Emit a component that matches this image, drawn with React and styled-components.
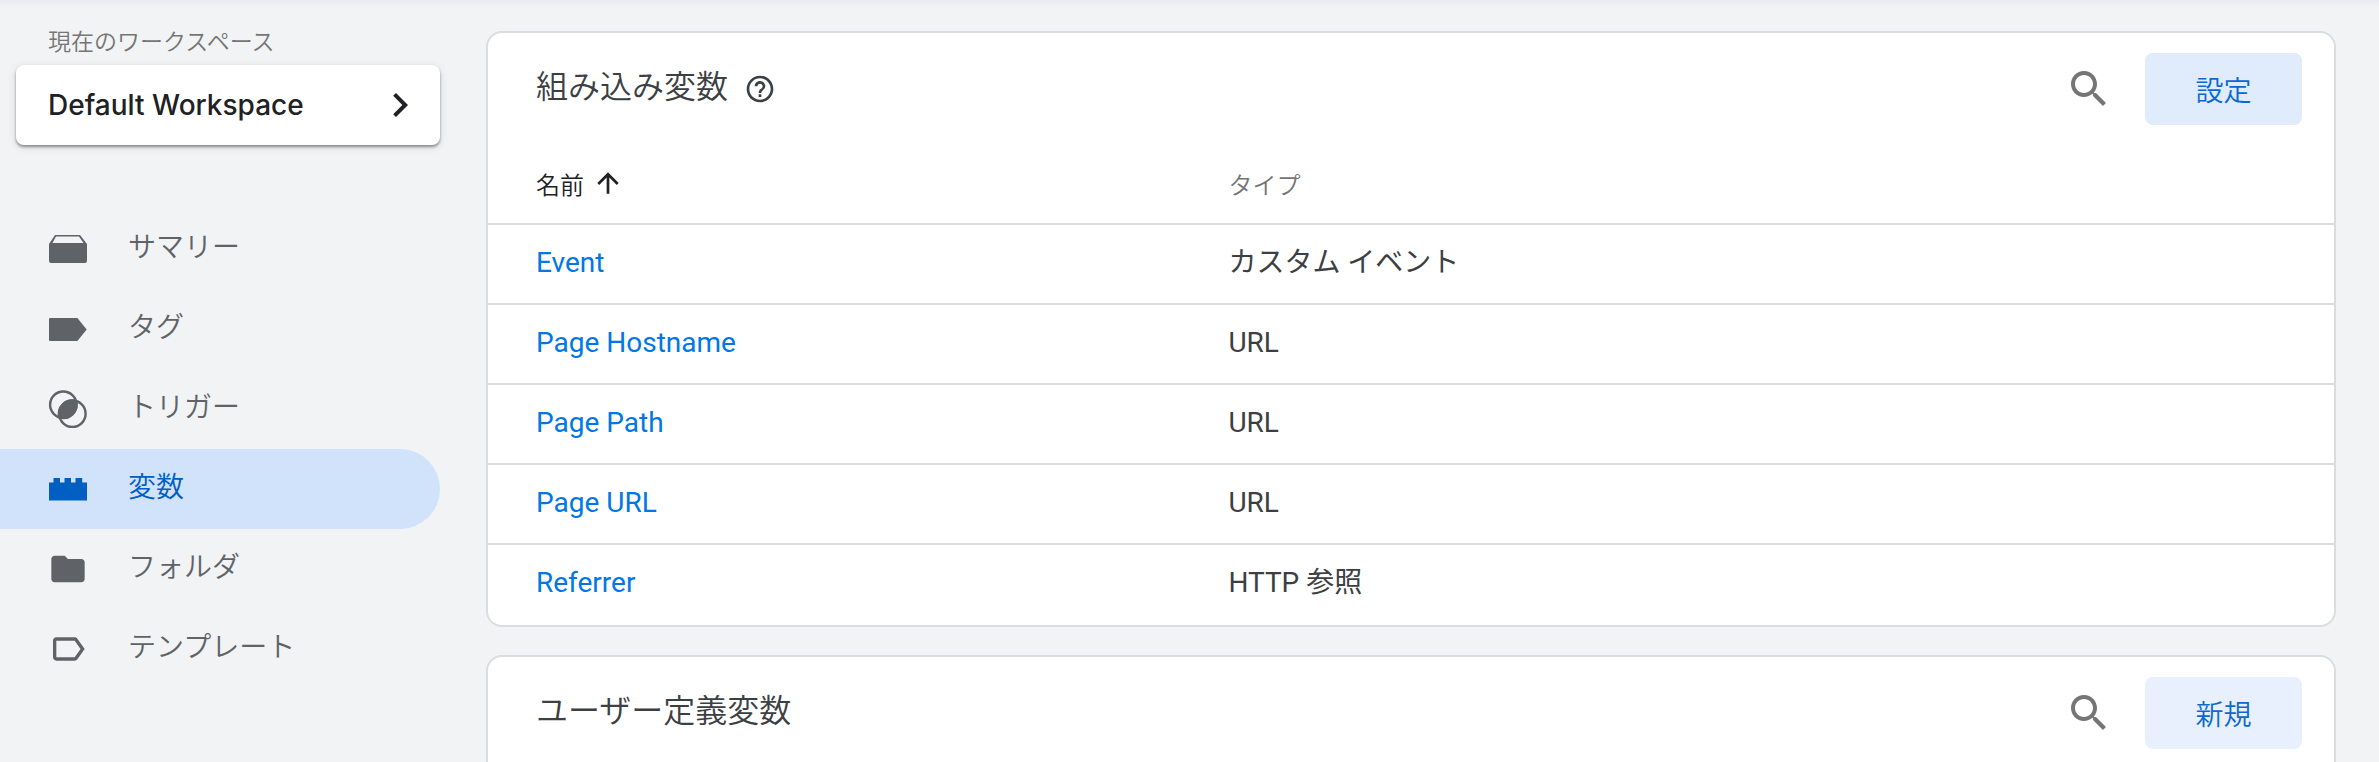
import styled, { createGlobalStyle } from 'styled-components';

const GlobalStyle = createGlobalStyle`
    * {
        box-sizing: border-box;
    }
    body {
        margin: 0;
        background-color: #f1f3f4;
        color: #3c4043;
        font-family: Roboto, "Noto Sans CJK JP", sans-serif;
        font-size: 28px;
        font-weight: 350;
    }
    button {
        font-family: inherit;
        border: none;
        cursor: pointer;
    }
    svg {
        display: block;
        flex: none;
        fill: currentColor;
    }
`;

const Page = styled.div`
    display: flex;
    gap: 46px;
    height: 100vh;
    overflow: hidden;
    background-image: linear-gradient(#e8ecee, #f1f3f4 8px);
`;

const Sidebar = styled.aside`
    flex: none;
    width: 440px;
    padding-top: 26px;
`;

const WorkspaceLabel = styled.div`
    padding-left: 48px;
    font-size: 23px;
    line-height: 34px;
    color: #757575;
`;

const WorkspaceButton = styled.button`
    display: flex;
    align-items: center;
    justify-content: space-between;
    width: 424px;
    height: 80px;
    margin: 5px 0 64px 16px;
    padding: 0 16px 0 32px;
    border-radius: 8px;
    background-color: white;
    box-shadow: 0 2px 3px rgba(0, 0, 0, 0.4), 0 2px 10px rgba(60, 64, 67, 0.12);
    color: #202124;
    font-family: Inter, sans-serif;
    font-size: 28px;
    font-weight: 500;
`;

const NavItem = styled.a`
    display: flex;
    align-items: center;
    gap: 40px;
    height: 80px;
    padding-left: 48px;
    border-radius: 0 40px 40px 0;
    background-color: ${props => props.$active ? '#d1e2fb' : 'transparent'};
    color: ${props => props.$active ? '#005fc1' : '#5f6368'};
    text-decoration: none;
`;

const NavText = styled.span`
    padding-bottom: 2px;
    line-height: 40px;
`;

const Main = styled.main`
    flex: 1;
    padding: 31px 43px 0 0;
`;

const Card = styled.section`
    min-height: 240px;
    margin-bottom: 28px;
    border: 2px solid #dadce0;
    border-radius: 16px;
    background-color: white;
`;

const CardHeader = styled.header`
    display: flex;
    align-items: center;
    height: 112px;
    padding: 0 32px 0 48px;
`;

const Title = styled.h2`
    margin: 0;
    padding-bottom: 4px;
    font-size: 32px;
    font-weight: inherit;
    line-height: 48px;
`;

const IconButton = styled.button`
    padding: 0;
    background: none;
    color: ${props => props.$color};
    margin-left: ${props => props.$end ? 'auto' : '16px'};
`;

const ActionButton = styled.button`
    width: 157px;
    height: 72px;
    margin-left: 32px;
    border-radius: 8px;
    background-color: ${props => props.$hover ? '#e0ebfc' : '#e8f0fd'};
    color: #0b69d0;
    font-size: 28px;
    font-weight: inherit;
`;

const Table = styled.table`
    width: 100%;
    border-collapse: separate;
    border-spacing: 0;
    table-layout: fixed;
`;

const Th = styled.th`
    width: ${props => props.$first ? '40%' : 'auto'};
    height: 80px;
    padding: 0 0 2px ${props => props.$first ? '48px' : '2px'};
    border-bottom: 2px solid #dadce0;
    color: ${props => props.$first ? '#202124' : '#757575'};
    font-size: 24px;
    font-weight: inherit;
    text-align: left;
`;

const SortLabel = styled.span`
    display: flex;
    align-items: center;
    gap: 8px;
`;

const Td = styled.td`
    height: 80px;
    padding: 0 0 2px 2px;
    border-bottom: 2px solid #dadce0;
    font-size: 28px;
    font-weight: 400;
    line-height: 40px;
    &:first-child {
        padding-left: 48px;
    }
    tr:last-child > & {
        border-bottom-color: transparent;
    }
`;

const VariableLink = styled.a`
    color: #0077e6;
    text-decoration: none;
`;

const ICONS = {
    help: 'M11 18h2v-2h-2v2zm1-16C6.48 2 2 6.48 2 12s4.48 10 10 10 10-4.48 10-10S17.52 2 12 2zm0 18c-4.41 0-8-3.59-8-8s3.59-8 8-8 8 3.59 8 8-3.59 8-8 8zm0-14c-2.21 0-4 1.79-4 4h2c0-1.1.9-2 2-2s2 .9 2 2c0 2-3 1.75-3 5h2c0-2.25 3-2.5 3-5 0-2.21-1.79-4-4-4z',
    search: 'M15.5 14h-.79l-.28-.27C15.41 12.59 16 11.11 16 9.5 16 5.91 13.09 3 9.5 3S3 5.91 3 9.5 5.91 16 9.5 16c1.61 0 3.09-.59 4.23-1.57l.27.28v.79l5 4.99L20.49 19l-4.99-5zm-6 0C7.01 14 5 11.99 5 9.5S7.01 5 9.5 5 14 7.01 14 9.5 11.99 14 9.5 14z',
    arrowUp: 'M4 12l1.41 1.41L11 7.83V20h2V7.83l5.58 5.59L20 12l-8-8-8 8z',
    chevron: 'M8.59 16.59L13.17 12 8.59 7.41 10 6l6 6-6 6z',
    folder: 'M10 4H4c-1.1 0-1.99.9-1.99 2L2 18c0 1.1.9 2 2 2h16c1.1 0 2-.9 2-2V8c0-1.1-.9-2-2-2h-8l-2-2z',
    template: 'M17.63 5.84C17.27 5.33 16.67 5 16 5L5 5.01C3.9 5.01 3 5.9 3 7v10c0 1.1.9 1.99 2 1.99L16 19c.67 0 1.27-.33 1.63-.84L22 12l-4.37-6.16zM16 17H5V7h11l3.55 5L16 17z',
};

const Icon = ({ name, size }) => (
    <svg width={size} height={size} viewBox="0 0 24 24" aria-hidden="true">
        <path d={ICONS[name]} />
    </svg>
);

const SummaryIcon = () => (
    <svg width="40" height="40" viewBox="0 0 40 40" aria-hidden="true">
        <path fillRule="evenodd" d="M7 6h25l7 9v17a2 2 0 0 1-2 2H3a2 2 0 0 1-2-2V15zM8 7.5L4.5 14h31L31 7.5z" />
    </svg>
);

const TagIcon = () => (
    <svg width="40" height="40" viewBox="0 0 40 40" aria-hidden="true">
        <path d="M2 9h27.4l9.3 11.5L29.4 32H2a1 1 0 0 1-1-1V10a1 1 0 0 1 1-1z" />
    </svg>
);

const TriggerIcon = () => (
    <svg width="40" height="40" viewBox="0 0 40 40" aria-hidden="true">
        <g fill="none" stroke="currentColor" strokeWidth="2.4">
            <circle cx="15.3" cy="15.7" r="13.2" />
            <circle cx="24.4" cy="24.7" r="13.2" />
        </g>
        <path d="M29 11.3A14.4 14.4 0 0 1 10.4 29.3A14.4 14.4 0 0 1 29 11.3z" />
    </svg>
);

const VariableIcon = () => (
    <svg width="40" height="40" viewBox="0 0 40 40" aria-hidden="true">
        <path d="M1 13.5h4.5V9H12v4.5h4.5V9H23v4.5h4.5V9h6.7v4.5H39v18H1z" />
    </svg>
);

const navItems = [
    { label: 'サマリー', icon: <SummaryIcon /> },
    { label: 'タグ', icon: <TagIcon /> },
    { label: 'トリガー', icon: <TriggerIcon /> },
    { label: '変数', icon: <VariableIcon />, active: true },
    { label: 'フォルダ', icon: <Icon name="folder" size={40} /> },
    { label: 'テンプレート', icon: <Icon name="template" size={40} /> },
];

const builtInVariables = [
    { name: 'Event', type: 'カスタム イベント' },
    { name: 'Page Hostname', type: 'URL' },
    { name: 'Page Path', type: 'URL' },
    { name: 'Page URL', type: 'URL' },
    { name: 'Referrer', type: 'HTTP 参照' },
];

const VariableTable = ({ rows }) => (
    <Table>
        <thead>
            <tr>
                <Th $first aria-sort="ascending">
                    <SortLabel>名前 <Icon name="arrowUp" size={32} /></SortLabel>
                </Th>
                <Th>タイプ</Th>
            </tr>
        </thead>
        <tbody>
            {rows.map(row => (
                <tr key={row.name}>
                    <Td><VariableLink href="#">{row.name}</VariableLink></Td>
                    <Td>{row.type}</Td>
                </tr>
            ))}
        </tbody>
    </Table>
);

const App = () => {
  return (
    <>
        <GlobalStyle />
        <Page>
            <Sidebar>
                <WorkspaceLabel id="workspace-label">現在のワークスペース</WorkspaceLabel>
                <WorkspaceButton aria-describedby="workspace-label">
                    Default Workspace
                    <Icon name="chevron" size={48} />
                </WorkspaceButton>
                <nav>
                    {navItems.map(item => (
                        <NavItem key={item.label} href="#" $active={item.active}>
                            {item.icon}
                            <NavText>{item.label}</NavText>
                        </NavItem>
                    ))}
                </nav>
            </Sidebar>
            <Main>
                <Card>
                    <CardHeader>
                        <Title>組み込み変数</Title>
                        <IconButton $color="#3c4043" aria-label="ヘルプ">
                            <Icon name="help" size={32} />
                        </IconButton>
                        <IconButton $color="#757575" $end aria-label="検索">
                            <Icon name="search" size={48} />
                        </IconButton>
                        <ActionButton $hover>設定</ActionButton>
                    </CardHeader>
                    <VariableTable rows={builtInVariables} />
                </Card>
                <Card>
                    <CardHeader>
                        <Title>ユーザー定義変数</Title>
                        <IconButton $color="#757575" $end aria-label="検索">
                            <Icon name="search" size={48} />
                        </IconButton>
                        <ActionButton>新規</ActionButton>
                    </CardHeader>
                </Card>
            </Main>
        </Page>
    </>
  )
}

export default App;
